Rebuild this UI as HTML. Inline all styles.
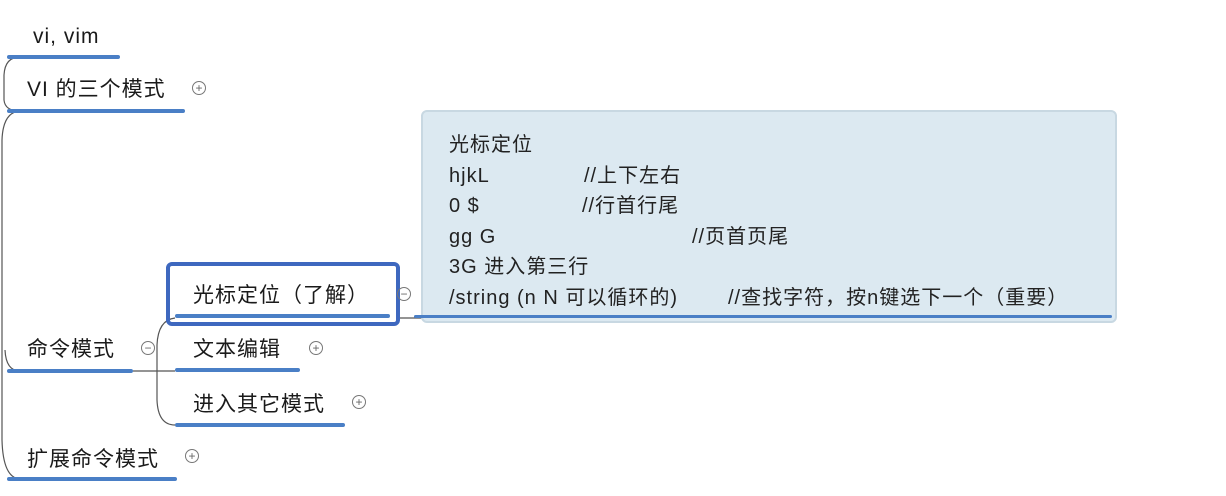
<!DOCTYPE html>
<html><head><meta charset="utf-8"><style>
body{margin:0;width:1226px;height:496px;background:#fff;position:relative;overflow:hidden;font-family:"Liberation Sans","Noto Sans CJK SC",sans-serif;color:#1a1a1a}
.t{position:absolute;font-size:21px;line-height:24px;white-space:nowrap;letter-spacing:1px}
.u{position:absolute;height:4px;background:#4a7fc6;border-radius:2px}
.c{position:absolute;width:12px;height:12px;border:1.3px solid #777;border-radius:50%;font-size:12px;line-height:12px;text-align:center;color:#666}
.n{position:absolute;font-size:20px;line-height:22px;white-space:nowrap;color:#222;letter-spacing:1px}
</style></head><body>
<svg width="1226" height="496" style="position:absolute;left:0;top:0">
<path d="M20 57 Q5 57 4 75 L4 100 Q5 111 20 111" fill="none" stroke="#555" stroke-width="1.2"/>
<path d="M20 111 Q3 112 2 140 L2 440 Q3 478 20 479" fill="none" stroke="#555" stroke-width="1.2"/>
<path d="M5 350 Q6 371 20 371" fill="none" stroke="#555" stroke-width="1.2"/>
<path d="M133 371 L175 371" stroke="#555" stroke-width="1.2"/>
<path d="M175 318 Q158 320 157 345 L157 400 Q158 425 175 425" fill="none" stroke="#555" stroke-width="1.2"/>
<path d="M398 318 L425 318" stroke="#555" stroke-width="1.2"/>
</svg>
<div class="t" style="left:33px;top:25px">vi, vim</div>
<div class="u" style="left:7px;top:55px;width:113px"></div>
<div class="t" style="left:27px;top:78px">VI 的三个模式</div>
<div class="u" style="left:7px;top:109px;width:178px"></div>
<div class="c" style="left:192px;top:81px">+</div>

<div style="position:absolute;left:421px;top:110px;width:692px;height:209px;background:#dce9f1;border:2px solid #c8d8e2;border-radius:6px"></div>
<div class="u" style="left:414px;top:315px;width:698px;height:3px"></div>
<div class="n" style="left:449px;top:134px">光标定位</div>
<div class="n" style="left:449px;top:165px">hjkL</div><div class="n" style="left:584px;top:165px">//上下左右</div>
<div class="n" style="left:449px;top:195px">0 $</div><div class="n" style="left:582px;top:195px">//行首行尾</div>
<div class="n" style="left:449px;top:226px">gg G</div><div class="n" style="left:692px;top:226px">//页首页尾</div>
<div class="n" style="left:449px;top:256px">3G 进入第三行</div>
<div class="n" style="left:449px;top:287px">/string (n N 可以循环的)</div><div class="n" style="left:728px;top:287px">//查找字符，按n键选下一个（重要）</div>

<div style="position:absolute;left:166px;top:262px;width:226px;height:56px;border:4px solid #3e68bf;border-radius:6px"></div>
<div class="u" style="left:175px;top:314px;width:215px"></div>
<div class="t" style="left:193px;top:284px">光标定位（了解）</div>
<div class="c" style="left:397px;top:287px">−</div>

<div class="t" style="left:27px;top:338px">命令模式</div>
<div class="u" style="left:7px;top:369px;width:126px"></div>
<div class="c" style="left:141px;top:341px">−</div>
<div class="t" style="left:193px;top:338px">文本编辑</div>
<div class="u" style="left:175px;top:368px;width:125px"></div>
<div class="c" style="left:309px;top:341px">+</div>
<div class="t" style="left:193px;top:393px">进入其它模式</div>
<div class="u" style="left:175px;top:423px;width:170px"></div>
<div class="c" style="left:352px;top:395px">+</div>
<div class="t" style="left:27px;top:448px">扩展命令模式</div>
<div class="u" style="left:7px;top:477px;width:170px"></div>
<div class="c" style="left:185px;top:449px">+</div>
</body></html>
